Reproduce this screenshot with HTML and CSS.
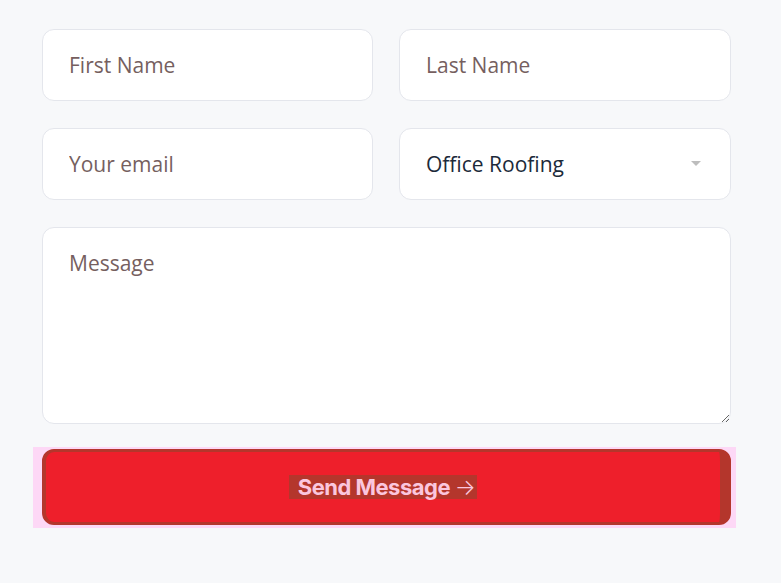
FILE: index.html
```html
<html>
  <head>
    <title>Contact</title>
    <link rel="stylesheet" href="styles.css">
  </head>
  <body>
    <form class="contact-form">
      <input class="field" type="text" placeholder="First Name">
      <input class="field" type="text" placeholder="Last Name">
      <input class="field" type="email" placeholder="Your email">
      <div class="select-wrap">
        <select class="field select">
          <option>Office Roofing</option>
          <option>Home Roofing</option>
        </select>
      </div>
      <textarea class="field message" placeholder="Message"></textarea>
      <div class="btn-wrap">
        <button class="send" type="button"><span class="send-label">Send Message <span class="arrow">&rarr;</span></span></button>
      </div>
    </form>
  </body>
</html>
```
FILE: styles.css
```css
body {
  margin: 0;
  background: #f7f8fa;
  font-family: "Open Sans", "Noto Sans", sans-serif;
}

.contact-form {
  display: grid;
  grid-template-columns: 331px 332px;
  column-gap: 26px;
  row-gap: 27px;
  padding: 29px 0 0 42px;
  width: 689px;
}

.field {
  box-sizing: border-box;
  height: 72px;
  width: 100%;
  border: 1px solid #e4e6ec;
  border-radius: 12px;
  background: #fff;
  padding: 0 26px;
  font-family: "Open Sans", sans-serif;
  font-size: 21px;
  color: #1c2a3a;
  outline: none;
}

.field::placeholder {
  color: #765f5f;
}

.select-wrap {
  position: relative;
}

.select {
  -webkit-appearance: none;
  appearance: none;
}

.select-wrap::after {
  content: "";
  position: absolute;
  right: 30px;
  top: 33px;
  border-left: 5px solid transparent;
  border-right: 5px solid transparent;
  border-top: 5px solid #bdbdbd;
}

.message {
  grid-column: span 2;
  height: 197px;
  padding-top: 21px;
  resize: vertical;
}

.btn-wrap {
  grid-column: span 2;
  margin: -4px -5px 0 -9px;
  padding: 2px 5px 3px 9px;
  background: #fdd8f6;
}

.send {
  display: flex;
  align-items: center;
  justify-content: center;
  box-sizing: border-box;
  width: 100%;
  height: 76px;
  background: #ee1f2b;
  border-style: solid;
  border-color: #b4362c;
  border-width: 3px 11px 3px 4px;
  border-radius: 12px;
  cursor: pointer;
  padding: 0;
}

.send-label {
  background: #b4362c;
  color: #fbc6de;
  font-family: Inter, "Noto Sans", sans-serif;
  font-size: 22px;
  font-weight: 700;
  letter-spacing: -0.5px;
  padding: 0 2px 0 9px;
  line-height: 24px;
}

.arrow {
  font-weight: 300;
}
```
